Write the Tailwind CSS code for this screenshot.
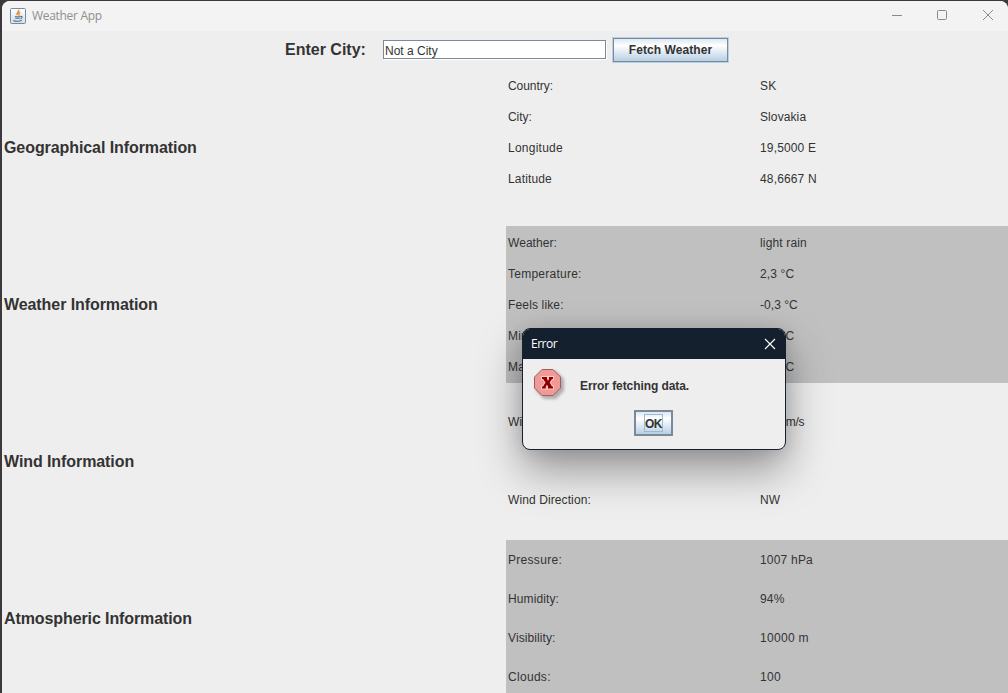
<!DOCTYPE html>
<html lang="en">
<head>
<meta charset="utf-8">
<title>Weather App</title>
<script src="https://cdn.jsdelivr.net/npm/@tailwindcss/browser@4"></script>
</head>
<body class="w-[1008px] h-[693px] overflow-hidden bg-[#3b393b] font-['Liberation_Sans',sans-serif] text-[12px] text-[#333333]">
<div class="relative w-full h-full pt-px pl-[2px]">
  <div class="flex flex-col h-full rounded-t-lg overflow-hidden bg-[#eeeeee]">
    <header class="flex items-center shrink-0 h-[30px] pl-2 bg-[#f3f3f3] text-[#8f8f8f]">
      <svg class="w-4 h-4" viewBox="0 0 16 16" fill="none">
        <defs><linearGradient id="tile" x2="0" y2="1"><stop stop-color="#fff"/><stop offset="1" stop-color="#d5dde4"/></linearGradient></defs>
        <rect x=".5" y=".5" width="15" height="15" rx="1" fill="url(#tile)" stroke="#6f8da5"/>
        <path d="M8.800 1.800c.7 2-3.200 2.800-1.300 5.200M10.300 4.200c-2 .9-1.800 1.500-1.200 2.300.3.500 0 .900-.4 1.200" stroke="#ee8a35" stroke-width="1.400"/>
        <path d="M4.800 8.700h5.400M5.300 10.300h4.400M3.300 12.400c2.500.9 6.300.9 8.500-.2M10.300 8.500c2.800-.6 2 1.700.1 2.200" stroke="#4d7190" stroke-width="1.100"/>
      </svg>
      <span class="ml-[6px] text-[12px] leading-4 font-['Open_Sans',sans-serif] tracking-[-0.3px] whitespace-nowrap">Weather App</span>
      <svg class="ml-auto w-[118px] h-[30px] shrink-0" viewBox="0 0 118 30" fill="none" stroke="#8a8a8a">
        <path d="M2 14.500h10"/><rect x="47.500" y="9.500" width="9" height="9" rx="1"/><path d="m93 9 10 10m0-10-10 10"/>
      </svg>
    </header>
    <div class="flex shrink-0 h-[38px] pl-[283px] pt-[6px]">
      <label for="city" class="w-[97px] pt-px text-[16px] leading-6 font-bold whitespace-nowrap">Enter City:</label>
      <input id="city" value="Not a City" class="mt-[3px] ml-px w-[223px] h-[19px] pl-px pt-[2px] border border-[#7a8a99] bg-white text-[12px] shadow-[1px_1px_0_#fff] outline-none">
      <button class="ml-[6px] w-[117px] h-[26px] border border-[#b8cfe5] bg-[#7a8a99] p-px"><span class="flex h-full items-center justify-center font-bold whitespace-nowrap bg-linear-to-b from-[#dce8f3] via-white via-30% to-[#b8cfe5] tracking-[0.08px]">Fetch Weather</span></button>
    </div>
    <main class="grid grid-cols-[504px_502px] auto-rows-[157px] whitespace-nowrap tracking-[0.15px]">
      <h2 class="flex items-center pl-[2px] text-[16px] font-bold tracking-[-0.08px]">Geographical Information</h2>
      <dl class="grid grid-cols-[252px_1fr] auto-rows-[31px] items-center pl-[2px] pt-px">
        <dt class="tracking-[-0.05px]">Country:</dt><dd>SK</dd>
        <dt class="tracking-[-0.05px]">City:</dt><dd class="tracking-[0.1px]">Slovakia</dd>
        <dt class="tracking-[0.25px]">Longitude</dt><dd>19,5000 E</dd>
        <dt>Latitude</dt><dd>48,6667 N</dd>
      </dl>
      <h2 class="flex items-center pl-[2px] text-[16px] font-bold tracking-[-0.08px]">Weather Information</h2>
      <dl class="grid grid-cols-[252px_1fr] auto-rows-[31px] items-center pl-[2px] pt-px bg-[#c0c0c0]">
        <dt class="tracking-[0.05px]">Weather:</dt><dd>light rain</dd>
        <dt class="tracking-[0.25px]">Temperature:</dt><dd>2,3 °C</dd>
        <dt>Feels like:</dt><dd class="tracking-[0.05px]">-0,3 °C</dd>
        <dt>Min:</dt><dd>1,1 °C</dd>
        <dt>Max:</dt><dd>3,3 °C</dd>
      </dl>
      <h2 class="flex items-center pl-[2px] text-[16px] font-bold tracking-[-0.08px]">Wind Information</h2>
      <dl class="grid grid-cols-[252px_1fr] auto-rows-[78px] items-center pl-[2px]">
        <dt>Wind Speed:</dt><dd class="tracking-[-0.2px]">1,34 m/s</dd>
        <dt class="tracking-[0.1px]">Wind Direction:</dt><dd>NW</dd>
      </dl>
      <h2 class="flex items-center pl-[2px] text-[16px] font-bold tracking-[-0.1px]">Atmospheric Information</h2>
      <dl class="grid grid-cols-[252px_1fr] auto-rows-[39px] items-center pl-[2px] bg-[#c0c0c0]">
        <dt class="tracking-[0.3px]">Pressure:</dt><dd class="tracking-[0.2px]">1007 hPa</dd>
        <dt class="tracking-[0.1px]">Humidity:</dt><dd>94%</dd>
        <dt class="tracking-[0.1px]">Visibility:</dt><dd class="tracking-[0.3px]">10000 m</dd>
        <dt class="tracking-[0.3px]">Clouds:</dt><dd class="tracking-[0.3px]">100</dd>
      </dl>
    </main>
  </div>

  <section role="dialog" class="absolute left-[522px] top-[328px] w-[264px] h-[122px] rounded-lg border border-[#14202d] bg-[#eeeeee] overflow-hidden shadow-[0_20px_44px_rgba(0,0,0,0.38),0_2px_18px_rgba(0,0,0,0.1)]">
    <div class="flex items-center h-[30px] pl-2 pr-[9px] pb-px bg-[#14202d] text-white">
      <span class="font-['Open_Sans',sans-serif] text-[12px] tracking-[-0.5px]">Error</span>
      <svg class="ml-auto w-3 h-3" viewBox="0 0 12 12" stroke="#fff" stroke-width="1.100"><path d="m1 1 10 10M11 1 1 11"/></svg>
    </div>
    <div class="flex h-[51px] pl-[10px] pt-[9px]">
      <svg class="w-8 h-8 shrink-0 overflow-visible" viewBox="0 0 32 32">
        <path class="blur-[1.5px]" d="M11 3h12l8 8v12l-8 8H11l-8-8V11z" fill="#999" opacity=".75"/>
        <path d="M9 1.500h11l7.500 7.500v11L20 27.500H9L1.500 20V9z" fill="#f09a98" stroke="#a45c5c"/>
        <path d="M9 9h5v2l1 1.700 1-1.700V9h4v2h-1l-2.300 3.500L19 18.500h1v2h-5v-2l-1-1.800-1.200 1.800v2H9v-2h1l2.500-4L10 11H9z" fill="#900000" stroke="#ffcaca" stroke-width="2" paint-order="stroke"/>
      </svg>
      <p class="ml-[15px] mt-[10px] font-bold leading-4 tracking-[-0.08px] whitespace-nowrap">Error fetching data.</p>
    </div>
    <button class="block ml-[111px] w-[39px] h-[26px] border-2 border-[#7a8a99] bg-linear-to-b from-[#dce8f3] via-white via-30% to-[#b8cfe5]"><span class="flex items-center justify-center mx-auto w-[19px] h-[18px] pt-px border border-[#a3b8cc] font-bold leading-none tracking-[-0.4px]">OK</span></button>
  </section>
</div>
</body>
</html>
